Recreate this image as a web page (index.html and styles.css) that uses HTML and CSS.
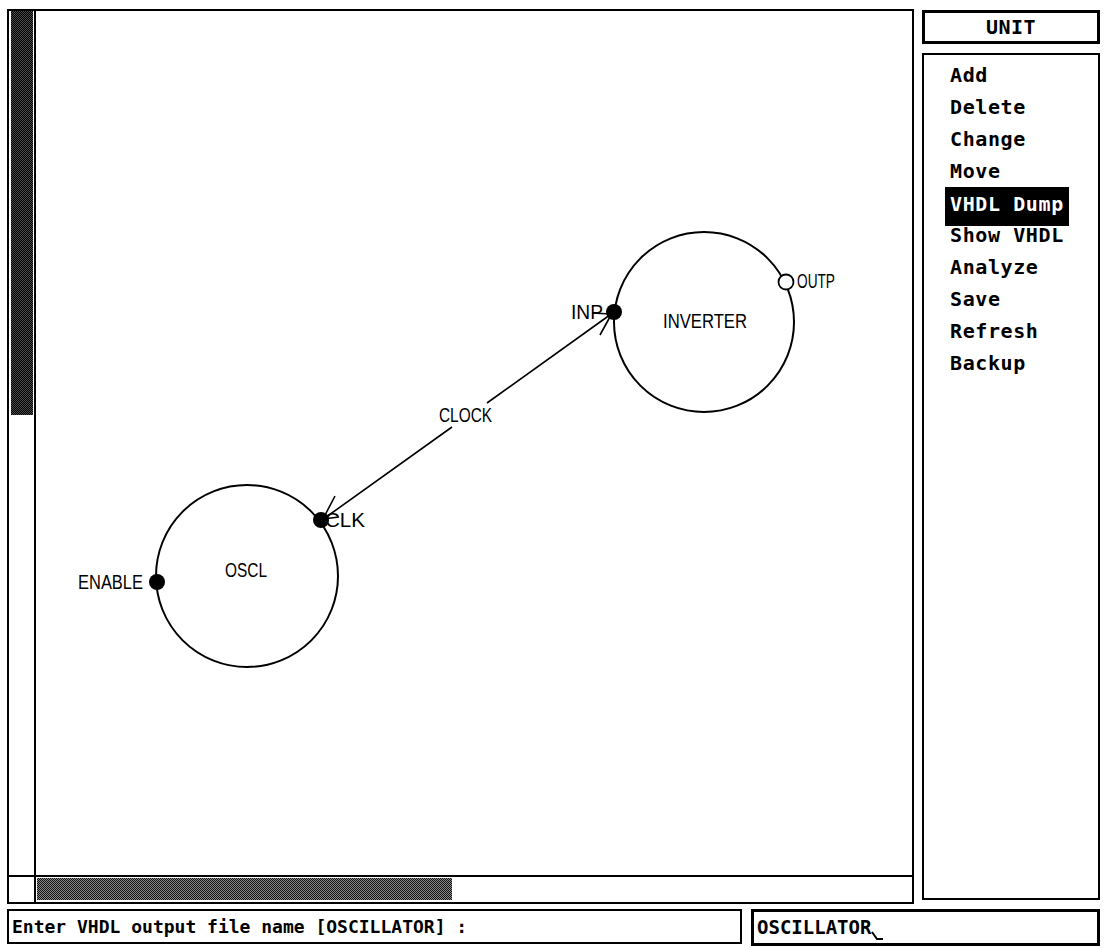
FILE: index.html
```html
<!DOCTYPE html>
<html lang="en">
<head>
    <meta charset="UTF-8">
    <meta name="viewport" content="width=device-width, initial-scale=1.0">
    <title>UNIT editor - VHDL Dump</title>
    <link rel="stylesheet" href="styles.css">
</head>
<body>
    <div class="screen">
        <div class="top">
            <div class="workspace">
                <div class="vscroll"><div class="vthumb"></div></div>
                <div class="canvas">
                    <!-- units and signals, drawn in screen coordinates -->
                    <svg class="diagram" width="876" height="864" viewBox="36 11 876 864">
                        <g fill="none" stroke="#000" stroke-width="2">
                            <circle cx="704" cy="322" r="90"/>
                            <circle cx="247" cy="576" r="91"/>
                        </g>
                        <g stroke="#000" stroke-width="1.6" fill="none">
                            <line x1="322" y1="520" x2="452" y2="427"/>
                            <line x1="487" y1="403" x2="614" y2="312"/>
                            <line x1="611" y1="314" x2="592" y2="313"/>
                            <line x1="611" y1="315" x2="600" y2="335"/>
                            <line x1="323" y1="519" x2="335" y2="496"/>
                            <line x1="323" y1="519" x2="339" y2="517"/>
                        </g>
                        <g fill="#000">
                            <circle cx="614" cy="312" r="8"/>
                            <circle cx="321" cy="520" r="8"/>
                            <circle cx="157" cy="582" r="8"/>
                        </g>
                        <circle cx="786" cy="282" r="7.5" fill="#fff" stroke="#000" stroke-width="1.8"/>
                        <g class="label">
                            <text x="571" y="319" textLength="32" lengthAdjust="spacingAndGlyphs">INP</text>
                            <text x="797" y="288" textLength="38" lengthAdjust="spacingAndGlyphs">OUTP</text>
                            <text x="663" y="328" textLength="84" lengthAdjust="spacingAndGlyphs">INVERTER</text>
                            <text x="439" y="422" textLength="53" lengthAdjust="spacingAndGlyphs">CLOCK</text>
                            <text x="325" y="527" textLength="40" lengthAdjust="spacingAndGlyphs">CLK</text>
                            <text x="225" y="577" textLength="42" lengthAdjust="spacingAndGlyphs">OSCL</text>
                            <text x="78" y="589" textLength="65" lengthAdjust="spacingAndGlyphs">ENABLE</text>
                        </g>
                    </svg>
                </div>
                <div class="corner"></div>
                <div class="hscroll"><div class="hthumb"></div></div>
            </div>
            <div class="side">
                <div class="unit-title">UNIT</div>
                <ul class="menu">
                    <li><span>Add</span></li>
                    <li><span>Delete</span></li>
                    <li><span>Change</span></li>
                    <li><span>Move</span></li>
                    <li class="active"><span>VHDL Dump</span></li>
                    <li><span>Show VHDL</span></li>
                    <li><span>Analyze</span></li>
                    <li><span>Save</span></li>
                    <li><span>Refresh</span></li>
                    <li><span>Backup</span></li>
                </ul>
            </div>
        </div>
        <div class="bottom">
            <div class="prompt">Enter VHDL output file name [OSCILLATOR] :</div>
            <div class="entry">OSCILLATOR<svg class="cursor" width="12" height="11" viewBox="0 0 12 11"><polyline points="1,1 6,8 12,8" fill="none" stroke="#000" stroke-width="2"/></svg></div>
        </div>
    </div>
</body>
</html>
```

FILE: styles.css
```css
body {
    margin: 0;
    background-color: #fff;
    color: #000;
    font-family: "DejaVu Sans Mono", "Liberation Mono", monospace;
}
.screen {
    width: 1106px;
    height: 948px;
    box-sizing: border-box;
    padding: 9px 6px 0 7px;
    display: flex;
    flex-direction: column;
    gap: 5px;
}
.top {
    display: flex;
    gap: 8px;
}

/* drawing area with its scroll bars */
.workspace {
    width: 907px;
    height: 895px;
    box-sizing: border-box;
    border: 2px solid #000;
    display: grid;
    grid-template-columns: 27px 1fr;
    grid-template-rows: 1fr 27px;
}
.vscroll {
    border-right: 2px solid #000;
}
.vthumb {
    margin-left: 2px;
    width: 22px;
    height: 404px;
    background: repeating-conic-gradient(#000 0 25%, #4a4a4a 0 50%) 0 0 / 2px 2px;
}
.canvas {
    overflow: hidden;
}
.diagram {
    display: block;
}
.label text {
    font-family: "Liberation Sans", Arial, sans-serif;
    font-size: 20px;
    fill: #000;
}
.corner {
    border-right: 2px solid #000;
    border-top: 2px solid #000;
}
.hscroll {
    border-top: 2px solid #000;
}
.hthumb {
    margin: 1px 0 0 1px;
    width: 415px;
    height: 22px;
    background: repeating-conic-gradient(#111 0 25%, #8a8a8a 0 50%) 0 0 / 2px 2px;
}

/* right hand menu */
.side {
    width: 178px;
    padding-top: 1px;
    display: flex;
    flex-direction: column;
    gap: 9px;
    font-weight: bold;
    font-size: 20px;
}
.unit-title {
    height: 34px;
    box-sizing: border-box;
    border: 3px solid #000;
    text-align: center;
    line-height: 28px;
    letter-spacing: 0.5px;
}
.menu {
    list-style: none;
    margin: 0;
    height: 847px;
    box-sizing: border-box;
    border: 2px solid #000;
    padding: 4px 0 0 21px;
    letter-spacing: 0.6px;
}
.menu li {
    height: 32px;
    line-height: 32px;
}
.menu li span {
    display: inline-block;
    vertical-align: top;
    padding: 0 5px;
}
.menu li.active span {
    position: relative;
    z-index: 1;
    background-color: #000;
    color: #fff;
    height: 39px;
    line-height: 34px;
}

/* command line */
.bottom {
    display: flex;
    gap: 9px;
    font-weight: bold;
    font-size: 19px;
}
.prompt {
    width: 735px;
    height: 35px;
    box-sizing: border-box;
    border: 2px solid #000;
    padding-left: 3px;
    font-size: 18px;
    line-height: 31px;
    white-space: nowrap;
}
.entry {
    width: 349px;
    height: 37px;
    box-sizing: border-box;
    border: 3px solid #000;
    padding-left: 3px;
    line-height: 31px;
}
.cursor {
    vertical-align: -8px;
}
```
